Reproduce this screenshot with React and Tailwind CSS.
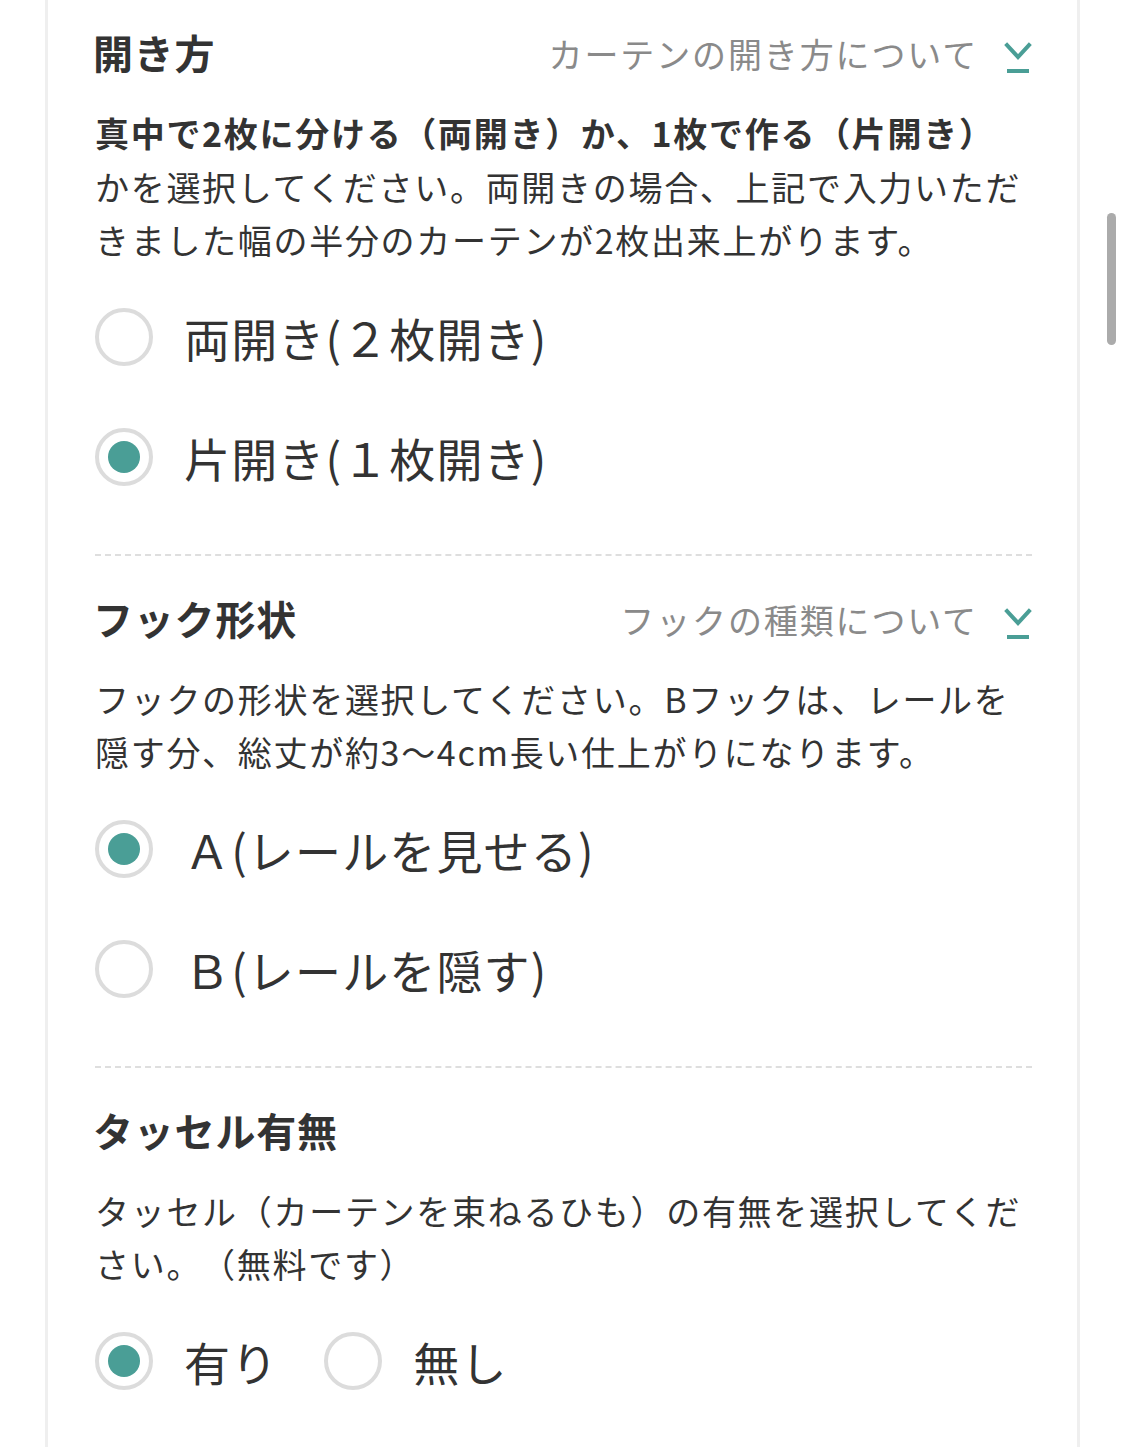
import React from "react";

const FONT = { fontFamily: '"Noto Sans CJK JP", "Noto Sans", sans-serif' };

function ChevronIcon() {
  return (
    <svg width="28" height="32" viewBox="0 0 28 32" className="shrink-0 mt-[12px]">
      <path d="M3 3 L14 15 L25 3" fill="none" stroke="#4a9e96" strokeWidth="4" strokeLinecap="square" />
      <rect x="3" y="27" width="22" height="4" fill="#4a9e96" />
    </svg>
  );
}

function Radio({ checked, label }) {
  return (
    <div className="flex items-center h-[60px]">
      <div className="w-[58px] h-[58px] rounded-full border-[4px] border-[#dcdcdc] flex items-center justify-center shrink-0 bg-white">
        {checked && <div className="w-[32px] h-[32px] rounded-full bg-[#4a9e96]" />}
      </div>
      <span className="ml-[31px] text-[46px] leading-[60px] tracking-[0.025em] text-[#333] whitespace-nowrap">{label}</span>
    </div>
  );
}

function Heading({ title, link }) {
  return (
    <div className="flex items-center justify-between h-[60px]">
      <h2 className="text-[40px] font-bold leading-[60px] text-[#333] tracking-[0.02em] -ml-[2px]">{title}</h2>
      {link && (
        <div className="flex items-center gap-[26px]">
          <span className="text-[34px] tracking-[0.055em] text-[#8a8a8a] leading-[40px] whitespace-nowrap mt-[4px]">{link}</span>
          <ChevronIcon />
        </div>
      )}
    </div>
  );
}

function Para({ children }) {
  return (
    <p className="mt-[24px] text-[34px] leading-[53.5px] tracking-[0.05em] text-[#333] whitespace-nowrap">
      {children}
    </p>
  );
}

export default function App() {
  return (
    <div className="relative w-[1125px] h-[1447px] bg-white overflow-hidden" style={FONT}>
      <div className="ml-[45px] w-[1035px] h-full border-x-[3px] border-[#efefef] pl-[47px] pr-[45px]">
        {/* Section 1 */}
        <section className="pt-[22px] pb-[67px] border-b-[2px] border-dashed border-[#dedede]">
          <Heading title="開き方" link="カーテンの開き方について" />
          <Para>
            <span className="font-bold">真中で2枚に分ける（両開き）か、1枚で作る（片開き）</span>
            <br />
            かを選択してください。両開きの場合、上記で入力いただ
            <br />
            きました幅の半分のカーテンが2枚出来上がります。
          </Para>
          <div className="mt-[40px] flex flex-col gap-[60px]">
            <Radio label="両開き(２枚開き)" />
            <Radio checked label="片開き(１枚開き)" />
          </div>
        </section>

        {/* Section 2 */}
        <section className="pt-[32px] pb-[67px] border-b-[2px] border-dashed border-[#dedede]">
          <Heading title="フック形状" link="フックの種類について" />
          <Para>
            フックの形状を選択してください。Bフックは、レールを
            <br />
            隠す分、総丈が約3〜4cm長い仕上がりになります。
          </Para>
          <div className="mt-[40px] flex flex-col gap-[60px]">
            <Radio checked label="Ａ(レールを見せる)" />
            <Radio label="Ｂ(レールを隠す)" />
          </div>
        </section>

        {/* Section 3 */}
        <section className="pt-[32px]">
          <Heading title="タッセル有無" />
          <Para>
            タッセル（カーテンを束ねるひも）の有無を選択してくだ
            <br />
            さい。<span className="ml-[16px]">（無料です）</span>
          </Para>
          <div className="mt-[40px] flex items-center gap-[46px]">
            <Radio checked label="有り" />
            <Radio label="無し" />
          </div>
        </section>
      </div>

      {/* scrollbar */}
      <div className="absolute left-[1107px] top-[213px] w-[9px] h-[132px] rounded-full bg-[#ababab]" />
    </div>
  );
}
